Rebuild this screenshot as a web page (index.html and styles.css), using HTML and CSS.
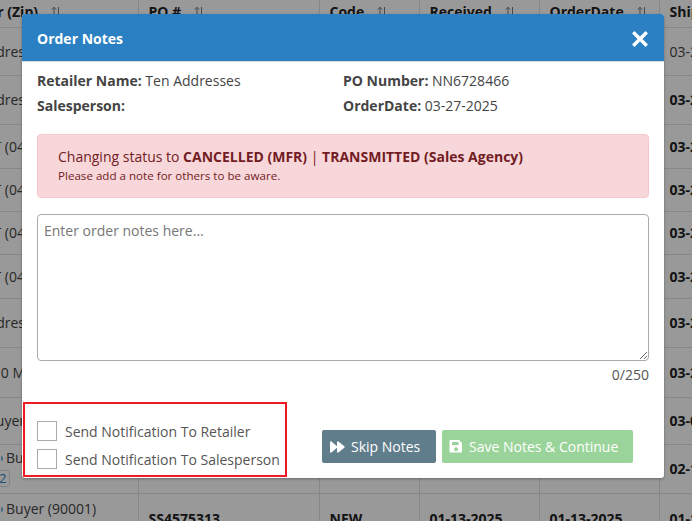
FILE: index.html
```html
<!DOCTYPE html>
<html lang="en">
<head>
<meta charset="utf-8">
<title>Order Notes</title>
<link rel="stylesheet" href="styles.css">
</head>
<body>
<div class="page">
  <table class="orders">
    <colgroup>
      <col class="c-buyer"><col class="c-po"><col class="c-code"><col class="c-date"><col class="c-date"><col class="c-ship">
    </colgroup>
    <thead>
      <tr class="h">
        <th class="head-first">Buyer (Zip)<svg class="sort" viewBox="0 0 10 12"><path d="M3 11V1.500M.8 3.700 3 1.200l2.200 2.500M7.500 1v9.500M5.300 8.300l2.200 2.500 2.200-2.500"/></svg></th>
        <th>PO #<svg class="sort" viewBox="0 0 10 12"><path d="M3 11V1.500M.8 3.700 3 1.200l2.200 2.500M7.500 1v9.500M5.300 8.300l2.200 2.500 2.200-2.500"/></svg></th>
        <th>Code<svg class="sort" viewBox="0 0 10 12"><path d="M3 11V1.500M.8 3.700 3 1.200l2.200 2.500M7.500 1v9.500M5.300 8.300l2.200 2.500 2.200-2.500"/></svg></th>
        <th>Received<svg class="sort" viewBox="0 0 10 12"><path d="M3 11V1.500M.8 3.700 3 1.200l2.200 2.500M7.500 1v9.500M5.300 8.300l2.200 2.500 2.200-2.500"/></svg></th>
        <th>OrderDate<svg class="sort" viewBox="0 0 10 12"><path d="M3 11V1.500M.8 3.700 3 1.200l2.200 2.500M7.500 1v9.500M5.300 8.300l2.200 2.500 2.200-2.500"/></svg></th>
        <th>Ship</th>
      </tr>
    </thead>
    <tbody>
      <tr class="r48"><td class="right">Ten Addres</td><td></td><td></td><td></td><td></td><td>03-27-2025</td></tr>
      <tr class="r49"><td class="right">Ten Addres</td><td></td><td></td><td></td><td></td><td class="b">03-27-2025</td></tr>
      <tr class="r44"><td class="right">T (04</td><td></td><td></td><td></td><td></td><td class="b">03-27-2025</td></tr>
      <tr class="r43"><td class="right">T (04</td><td></td><td></td><td></td><td></td><td class="b">03-27-2025</td></tr>
      <tr class="r43"><td class="right">T (04</td><td></td><td></td><td></td><td></td><td class="b">03-27-2025</td></tr>
      <tr class="r44"><td class="right">T (04</td><td></td><td></td><td></td><td></td><td class="b">03-27-2025</td></tr>
      <tr class="r49"><td class="right">Ten Addres</td><td></td><td></td><td></td><td></td><td class="b">03-27-2025</td></tr>
      <tr class="r50"><td class="right">0 M</td><td></td><td></td><td></td><td></td><td class="b">03-27-2025</td></tr>
      <tr class="r47"><td class="right">Buyer</td><td></td><td></td><td></td><td></td><td class="b">03-06-2025</td></tr>
      <tr class="r49"><td class="left up"><span class="dot"></span>Buyer<br><span class="tag">2</span></td><td></td><td></td><td></td><td></td><td class="b">02-13-2025</td></tr>
      <tr class="r50"><td class="left top"><span class="dot"></span>Buyer (90001)</td><td class="b">SS4575313</td><td class="b">NEW</td><td class="b">01-13-2025</td><td class="b">01-13-2025</td><td class="b">01-13-2025</td></tr>
    </tbody>
  </table>

  <div class="backdrop"></div>

  <section class="modal">
    <header class="modal-head">
      <h1>Order Notes</h1>
      <svg class="close" viewBox="0 0 16 16" aria-label="Close"><path d="M2 2 14 14M14 2 2 14"/></svg>
    </header>
    <div class="modal-body">
      <div class="info">
        <p><b>Retailer Name:</b> Ten Addresses</p>
        <p><b>PO Number:</b> NN6728466</p>
        <p><b>Salesperson:</b></p>
        <p><b>OrderDate:</b> 03-27-2025</p>
      </div>
      <div class="alert">
        <p class="alert-main">Changing status to <b>CANCELLED (MFR)</b> | <b>TRANSMITTED (Sales Agency)</b></p>
        <p class="alert-sub">Please add a note for others to be aware.</p>
      </div>
      <textarea class="notes" placeholder="Enter order notes here..."></textarea>
      <div class="count">0/250</div>
    </div>
    <footer class="modal-foot">
      <div class="notify">
        <label class="check"><span class="box"></span>Send Notification To Retailer</label>
        <label class="check"><span class="box"></span>Send Notification To Salesperson</label>
      </div>
      <div class="actions">
        <button class="btn skip"><svg class="ico" viewBox="0 0 16 12"><path d="M1 1.200c0-.8.8-1.200 1.400-.7L8 5.200V1.200c0-.8.8-1.200 1.400-.7l5.900 4.800c.5.400.5 1 0 1.400L9.400 11.500C8.800 12 8 11.600 8 10.800V6.800L2.400 11.500C1.800 12 1 11.600 1 10.800Z"/></svg>Skip Notes</button>
        <button class="btn save"><svg class="ico" viewBox="0 0 14 14"><path fill-rule="evenodd" d="M1.500 1H10l3 3v8.500c0 .6-.4 1-1 1H1.500c-.6 0-1-.4-1-1V2c0-.6.4-1 1-1ZM3 3v3h6.500V3ZM7 8.200a2 2 0 1 0 0 4 2 2 0 0 0 0-4Z"/></svg>Save Notes &amp; Continue</button>
      </div>
    </footer>
  </section>
</div>
</body>
</html>
```
FILE: styles.css
```css
* { box-sizing: border-box; }
html, body { margin: 0; padding: 0; }
body { font-family: "Open Sans", sans-serif; font-size: 14px; color: #444; background: #fff; }
.page { position: relative; width: 692px; height: 521px; overflow: hidden; }

.orders { border-collapse: collapse; table-layout: fixed; width: 860px; margin-left: -100px; font-size: 14px; color: #444; }
.c-buyer { width: 238px; }
.c-po { width: 181px; }
.c-code { width: 100px; }
.c-date { width: 120px; }
.c-ship { width: 101px; }
.orders th, .orders td { border: 1px solid #dee2e6; padding: 0 10px 0 9.500px; vertical-align: middle; text-align: left; overflow: hidden; white-space: nowrap; }
.orders th { border-top: 0; color: #222; font-weight: 700; vertical-align: top; line-height: 23px; }
.orders .head-first { text-align: right; padding-right: 77px; }
.orders .right { text-align: right; padding-right: 113px; }
.orders .left { padding-left: 100px; line-height: 20px; }
.orders .up { padding-bottom: 2px; }
.orders .top { vertical-align: top; padding-top: 5px; }
.h { height: 27px; }
.r48 { height: 48px; } .r49 { height: 49px; } .r44 { height: 44px; } .r43 { height: 43px; } .r50 { height: 50px; } .r47 { height: 47px; }
.b { font-weight: 700; color: #222; }
.sort { width: 10px; height: 12px; margin-left: 13px; vertical-align: -1px; fill: none; stroke: #777; stroke-width: 1; }
.dot { display: inline-block; width: 2px; height: 5px; margin-right: 3px; background: #6fb0dc; border-radius: 0 3px 3px 0; vertical-align: 2px; }
.tag { display: inline-block; border: 1px solid #ddd; border-radius: 3px; color: #2a7fc0; font-size: 13px; line-height: 15px; padding: 0 3px; margin-left: -6px; }

.backdrop { position: absolute; inset: 0; background: rgba(0, 0, 0, .4); }

.modal { position: absolute; left: 22px; top: 14px; width: 642px; height: 464px; background: #fff; border-radius: 3px; display: flex; flex-direction: column; box-shadow: 0 1px 3px rgba(0,0,0,.3); }
.modal-head { height: 48px; flex: none; background: #2a80c2; border-bottom: 1px solid #d9dfe4; border-radius: 3px 3px 0 0; padding: 2px 15px 0; display: flex; align-items: center; justify-content: space-between; }
.modal-head h1 { margin: 0; font-size: 14px; font-weight: 700; color: #fff; }
.close { width: 18px; height: 18px; fill: none; stroke: #fff; stroke-width: 3; }

.modal-body { flex: 1; padding: 0 15px; }
.info { display: grid; grid-template-columns: 306px 1fr; row-gap: 0; margin-top: 6px; line-height: 25px; }
.info p { margin: 0; }
.info b { color: #444; }

.alert { margin-top: 16px; height: 64px; background: #f8d7da; border: 1px solid #f5c6cb; border-radius: 4px; color: #721c24; padding: 12px 20px; }
.alert p { margin: 0; }
.alert-main { line-height: 20px; }
.alert-sub { font-size: 11.600px; line-height: 20px; margin-top: -1px !important; }

.notes { display: block; width: 100%; height: 147px; margin-top: 16px; border: 1px solid #aaa; border-radius: 4px; padding: 6px; font: 14px/20px "Open Sans", sans-serif; color: #444; background: #fff; outline: 0; }
.notes::placeholder { color: #777; opacity: 1; }
.count { text-align: right; line-height: 20px; margin-top: 4px; color: #555; }

.modal-foot { flex: none; display: flex; align-items: flex-start; padding: 0 30px 0 1px; height: 76px; }
.notify { width: 264px; height: 75px; border: 2px solid #ed1c24; padding: 17px 0 0 12px; display: flex; flex-direction: column; gap: 8px; }
.check { display: flex; align-items: center; gap: 8px; height: 20px; white-space: nowrap; color: #555; }
.box { width: 20px; height: 20px; border: 1px solid #aaa; background: #fff; flex: none; }

.actions { display: flex; gap: 6px; margin-left: 35px; margin-top: 28px; }
.btn { display: flex; align-items: center; height: 33px; border: 0; border-radius: 2px; padding: 0 7px; font: 14px "Open Sans", sans-serif; color: #fff; }
.ico { fill: #fff; width: 16px; height: 12px; margin-right: 6px; }
.skip { width: 114px; background: #607d8b; }
.save { width: 191px; background: #9ad49a; padding: 0 7px; }
.save .ico { width: 14px; height: 14px; margin-right: 6px; margin-top: -2px; }
```
